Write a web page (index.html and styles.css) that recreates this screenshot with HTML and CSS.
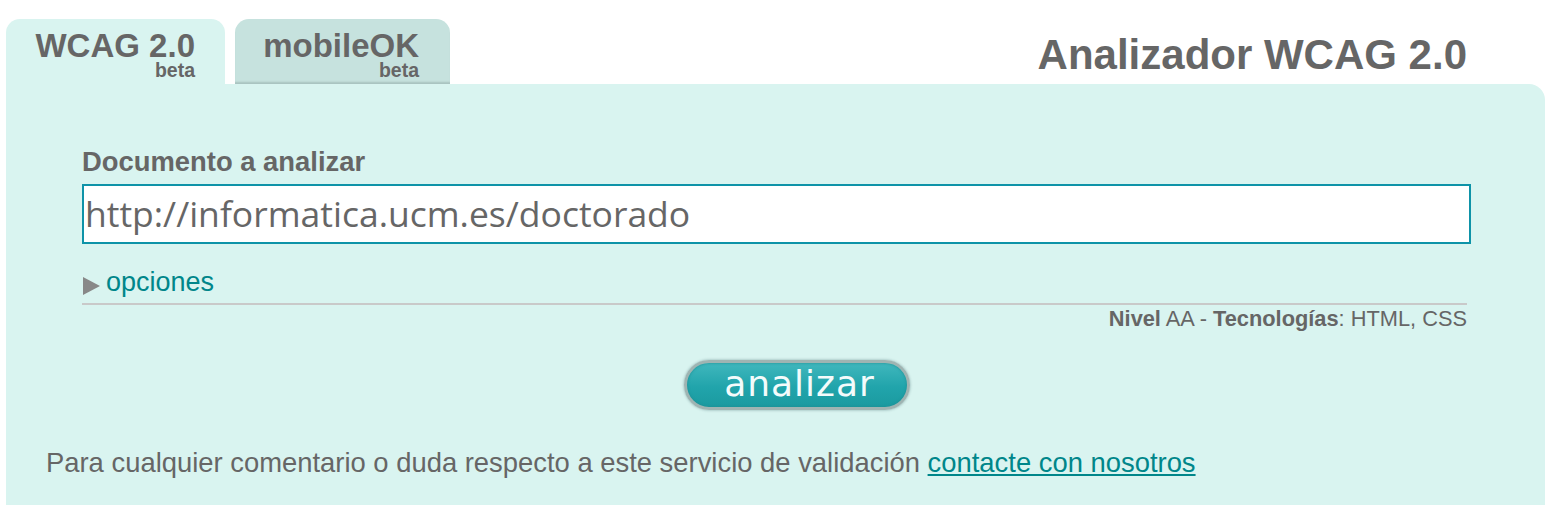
FILE: index.html
```html
<!DOCTYPE html>
<html lang="es">
<head>
<meta charset="utf-8">
<title>Analizador WCAG 2.0</title>
<link rel="stylesheet" href="styles.css">
</head>
<body>
<div class="page">
  <div class="header">
    <div class="tabs">
      <a class="tab tab-active" href="#"><span class="tab-name">WCAG 2.0</span><span class="tab-beta">beta</span></a>
      <a class="tab tab-other" href="#"><span class="tab-name">mobileOK</span><span class="tab-beta">beta</span></a>
    </div>
    <h1 class="title">Analizador WCAG 2.0</h1>
  </div>
  <div class="panel">
    <form class="form">
      <label class="label" for="uri">Documento a analizar</label>
      <input class="uri" id="uri" type="text" value="http://informatica.ucm.es/doctorado">
      <div class="options">
        <span class="tri"></span><a class="options-link" href="#">opciones</a>
      </div>
      <div class="summary"><b>Nivel</b> AA - <b>Tecnologías</b>: HTML, CSS</div>
      <div class="actions">
        <button class="btn" type="button">analizar</button>
      </div>
    </form>
    <p class="footer">Para cualquier comentario o duda respecto a este servicio de validación <a href="#">contacte con nosotros</a></p>
  </div>
</div>
</body>
</html>
```
FILE: styles.css
```css
* { box-sizing: border-box; }
html, body { margin: 0; background: #fff; }
body { font-family: "Liberation Sans", Arial, sans-serif; color: #666; }
.page { width: 1545px; padding-left: 6px; padding-top: 19px; height: 520px; }
.header { display: flex; align-items: flex-end; height: 65px; }
.tabs { display: flex; gap: 10px; align-items: flex-end; }
.tab {
  display: flex; flex-direction: column; align-items: flex-end;
  height: 65px; border-radius: 14px 14px 0 0;
  text-decoration: none; color: #666; font-weight: bold;
  padding-top: 10px;
}
.tab-active { width: 219px; background: #d9f4f0; padding-right: 30px; }
.tab-other { width: 215px; background: #c6e2de; padding-right: 31px; box-shadow: inset 0 -3px 2px -1px #a9c2bf; }
.tab-name { font-size: 33px; line-height: 33px; }
.tab-beta { font-size: 19.5px; line-height: 19px; margin-top: -1px; }
.title {
  margin: 0 0 0 auto; padding-right: 78px; font-size: 42px; line-height: 48px;
  font-weight: bold; color: #666; padding-bottom: 5px;
}
.panel {
  background: #d9f4f0; border-radius: 0 16px 0 0;
  height: 421px; padding: 62px 78px 0 76px;
}
.form { display: flex; flex-direction: column; }
.label { font-size: 27.4px; font-weight: bold; line-height: 32px; }
.uri {
  margin-top: 6px; height: 60px; width: 1389px;
  border: 2px solid #0e93a8; background: #fff; outline: none;
  font-family: "Open Sans", sans-serif; font-size: 35.5px; color: #666;
  padding: 0 1px 2px;
}
.options { display: flex; align-items: center; margin-top: 23px; border-bottom: 2px solid #c9c9c9; padding-bottom: 6px; height: 38px; }
.tri {
  width: 0; height: 0; border-left: 17px solid #888; border-top: 9px solid transparent; border-bottom: 9px solid transparent;
  margin: 8px 6px 0 1px;
}
.options-link { color: #00868a; text-decoration: none; font-size: 27px; }
.summary { text-align: right; font-size: 21.8px; margin-top: 1px; line-height: 26px; }
.summary b { font-weight: bold; }
.actions { display: flex; justify-content: center; margin-top: 28px; padding-left: 44px; }
.btn {
  width: 226px; height: 50px; border-radius: 25px;
  border: 3px solid #9fb4b2;
  background: linear-gradient(#40b7bd, #21a4ab 55%, #1b9aa0);
  box-shadow: 0 0 3px #8aa, inset 0 0 3px #1d8d92;
  color: #f4fbfb; font-family: "DejaVu Sans", sans-serif; font-size: 36px; letter-spacing: 1px;
  padding: 0 0 2px 6px; line-height: 40px;
}
.footer { margin: 37px 0 0 -36px; font-size: 27.4px; line-height: 32px; }
.footer a { color: #00868a; text-decoration: underline; }
```
